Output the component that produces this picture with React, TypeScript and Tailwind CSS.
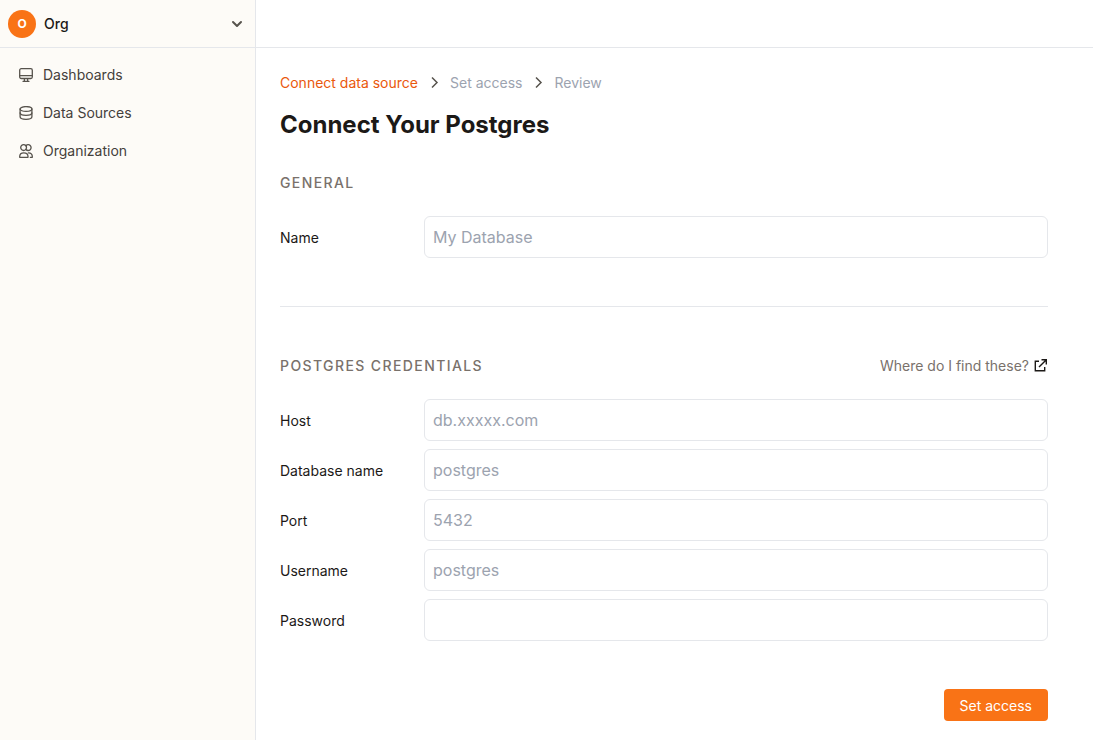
import React from 'react';
import { HiChevronDown } from 'react-icons/hi';

const DashboardIcon = () => (
  <svg viewBox="0 0 14 14" className="h-3.5 w-3.5" fill="none" stroke="currentColor" strokeWidth="1.3" strokeLinecap="round" strokeLinejoin="round">
    <rect x="0.7" y="0.7" width="12.6" height="9.8" rx="1.5" />
    <path d="M0.8 7.6h12.4M5.4 10.6v2.4M8.6 10.6v2.4M4 13.3h6" />
  </svg>
);

const DatabaseIcon = () => (
  <svg viewBox="0 0 14 14" className="h-3.5 w-3.5" fill="none" stroke="currentColor" strokeWidth="1.3" strokeLinecap="round" strokeLinejoin="round">
    <ellipse cx="7" cy="3" rx="5.9" ry="2.4" />
    <path d="M1.1 3v7.8c0 1.5 2.6 2.5 5.9 2.5s5.9-1 5.9-2.5V3" />
    <path d="M1.1 6.8c0 1.5 2.6 2.6 5.9 2.6s5.9-1.1 5.9-2.6" />
  </svg>
);

const UsersIcon = () => (
  <svg viewBox="0 0 14 14" className="h-3.5 w-3.5" fill="none" stroke="currentColor" strokeWidth="1.3" strokeLinecap="round" strokeLinejoin="round">
    <circle cx="4.6" cy="3.6" r="2.9" />
    <path d="M7 1.7a2.9 2.9 0 1 1 0 3.8" />
    <path d="M0.7 13.3v-.9c0-2.1 1.7-3.6 4.1-3.6s4.2 1.5 4.2 3.6v.9zM9.4 8.8c2.3.1 3.9 1.6 3.9 3.6v.9h-2" />
  </svg>
);

const StepChevron = () => (
  <svg viewBox="0 0 16 16" className="h-4 w-4 text-stone-600" fill="none" stroke="currentColor" strokeWidth="1.5" aria-hidden="true">
    <path d="M6 2.5l5 5-5 5" />
  </svg>
);

const ExternalIcon = () => (
  <svg viewBox="0 0 14 14" className="h-3.5 w-3.5 text-stone-900" fill="none" stroke="currentColor" strokeWidth="1.4" aria-hidden="true">
    <path d="M5 2.3H1.3v9.4h9.4V8M7.5 0.8h4.8V5.6M12.1 1L5 8.1" />
  </svg>
);

const navItems = [
  { label: 'Dashboards', icon: <DashboardIcon /> },
  { label: 'Data Sources', icon: <DatabaseIcon /> },
  { label: 'Organization', icon: <UsersIcon /> },
];

const credentials = [
  { id: 'host', label: 'Host', placeholder: 'db.xxxxx.com' },
  { id: 'database', label: 'Database name', placeholder: 'postgres' },
  { id: 'port', label: 'Port', placeholder: '5432' },
  { id: 'username', label: 'Username', placeholder: 'postgres' },
  { id: 'password', label: 'Password', type: 'password' },
];

interface FieldProps {
  id: string;
  label: string;
  placeholder?: string;
  type?: string;
}

const Field: React.FC<FieldProps> = ({ id, label, placeholder, type = 'text' }) => (
  <div className="flex items-center">
    <label htmlFor={id} className="w-36 shrink-0 pt-0.5 text-sm text-stone-900">{label}</label>
    <input
      id={id}
      type={type}
      placeholder={placeholder}
      className="min-w-0 flex-1 rounded-md border border-[#e5e7eb] bg-white p-2 text-base text-stone-900 placeholder:text-[#9ca3af] focus:border-[#f97316] focus:outline-none"
    />
  </div>
);

const Sidebar = () => (
  <aside className="w-64 shrink-0 border-r border-[#e5e7eb] bg-[#fdfbf7]">
    <button className="flex h-12 w-full items-center gap-2 border-b border-[#e5e7eb] px-2">
      <span className="flex h-7 w-7 items-center justify-center rounded-full bg-[#f97316] text-xs font-bold text-white">O</span>
      <span className="text-sm font-medium text-stone-900">Org</span>
      <HiChevronDown className="ml-auto h-5 w-5 text-stone-600" />
    </button>
    <nav className="flex flex-col gap-0.5 p-[9px]">
      {navItems.map((item) => (
        <a key={item.label} href="#" className="flex h-9 items-center gap-2.5 rounded-md px-2.5 text-sm text-stone-700 hover:bg-stone-100">
          <span className="text-stone-600">{item.icon}</span>
          {item.label}
        </a>
      ))}
    </nav>
  </aside>
);

export default function App() {
  return (
    <div className="flex min-h-screen bg-white font-['Inter',sans-serif]">
      <Sidebar />
      <div className="min-w-0 flex-1">
        <header className="h-12 border-b border-[#e5e7eb]" />
        <main className="max-w-[816px] px-6 pt-6 pb-4">
          <nav className="flex items-center gap-2 text-sm leading-[22px] text-[#9ca3af]">
            <a href="#" className="text-[#ea580c]">Connect data source</a>
            <StepChevron />
            <span>Set access</span>
            <StepChevron />
            <span>Review</span>
          </nav>
          <h1 className="mt-[15px] text-2xl font-bold text-stone-900">Connect Your Postgres</h1>

          <form onSubmit={(e) => e.preventDefault()}>
            <section className="mt-[31px] border-b border-[#e5e7eb] pb-12">
              <h2 className="mb-[22px] text-sm leading-[22px] font-medium tracking-widest text-stone-500 uppercase">General</h2>
              <Field id="name" label="Name" placeholder="My Database" />
            </section>

            <section className="mt-12">
              <div className="mb-[22px] flex items-center justify-between text-sm leading-[22px] text-stone-500">
                <h2 className="font-medium tracking-widest uppercase">Postgres credentials</h2>
                <a href="#" className="flex items-center gap-[5px]">
                  Where do I find these?
                  <ExternalIcon />
                </a>
              </div>
              <div className="flex flex-col gap-2">
                {credentials.map((field) => (
                  <Field key={field.id} {...field} />
                ))}
              </div>
            </section>

            <div className="mt-12 flex justify-end">
              <button type="submit" className="h-8 rounded bg-[#f97316] px-4 pt-0.5 text-sm text-white hover:bg-[#ea580c]">Set access</button>
            </div>
          </form>
        </main>
      </div>
    </div>
  );
}
